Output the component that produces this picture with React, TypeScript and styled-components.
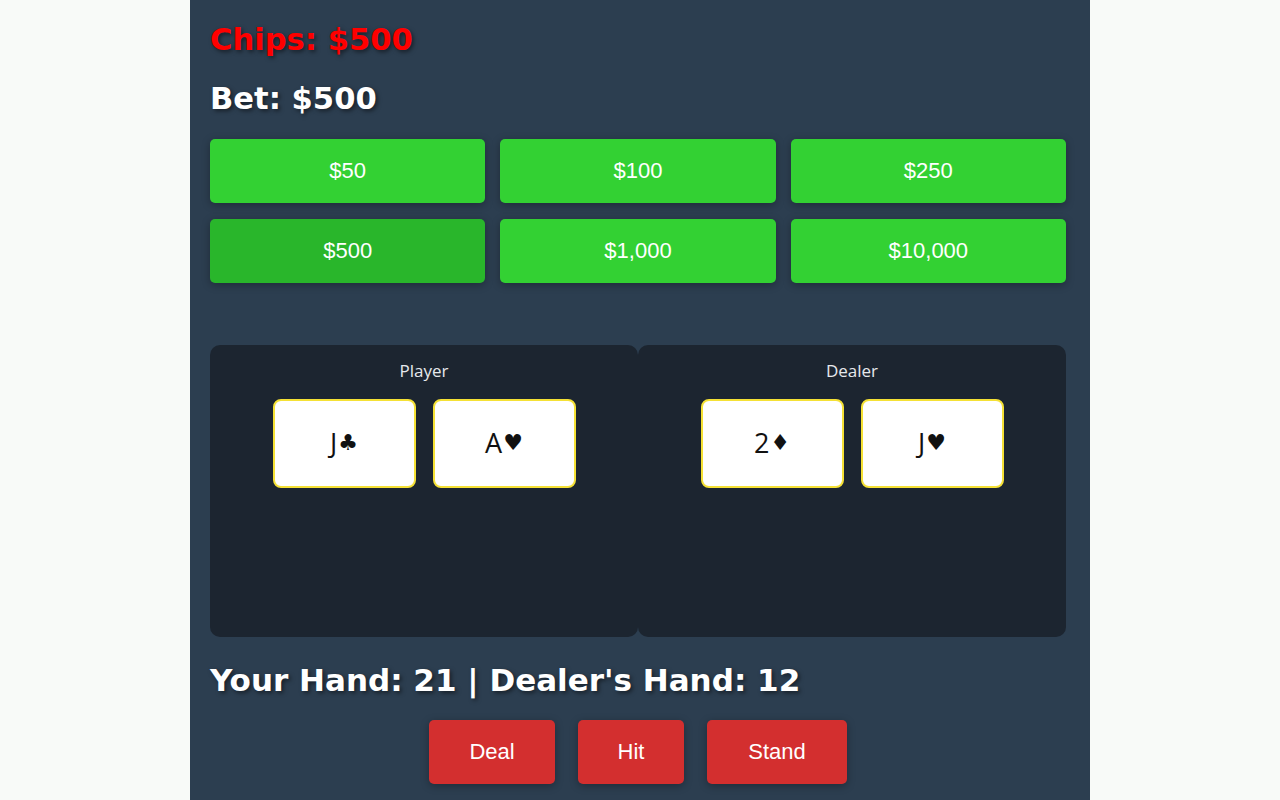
import React from "react";
import styled, { createGlobalStyle } from "styled-components";

const Global = createGlobalStyle`
  html, body { margin: 0; padding: 0; background: #f8faf8; }
  * { box-sizing: border-box; }
`;

const Page = styled.div`
  display: flex;
  justify-content: center;
  min-height: 800px;
`;

const Table = styled.div`
  width: 900px;
  background: #2c3e50;
  padding: 20px 24px 20px 20px;
  display: flex;
  flex-direction: column;
`;

const Title = styled.div<{ $color?: string }>`
  font-family: "DejaVu Sans", Verdana, sans-serif;
  font-weight: bold;
  font-size: 30.6px;
  line-height: 40px;
  color: ${(p) => p.$color || "#ffffff"};
  text-shadow: 2px 2px 4px rgba(0, 0, 0, 0.5);
`;

const BetGrid = styled.div`
  display: grid;
  grid-template-columns: repeat(3, 1fr);
  column-gap: 15px;
  row-gap: 16px;
  margin-top: 20px;
`;

const BetButton = styled.button<{ $active?: boolean }>`
  height: 64px;
  border: none;
  border-radius: 5px;
  background: ${(p) => (p.$active ? "#29b62b" : "#33d133")};
  color: #ffffff;
  font-family: "Liberation Sans", Arial, sans-serif;
  font-size: 22px;
  box-shadow: 0 2px 8px rgba(0, 0, 0, 0.3);
  cursor: pointer;
`;

const Hands = styled.div`
  display: grid;
  grid-template-columns: 1fr 1fr;
  margin-top: 62px;
`;

const Hand = styled.div`
  height: 292px;
  background: #1c2530;
  border-radius: 10px;
  padding-top: 15px;
  display: flex;
  flex-direction: column;
  align-items: center;
`;

const HandLabel = styled.div`
  font-family: "Open Sans", "Noto Sans", sans-serif;
  font-size: 17px;
  line-height: 22px;
  color: #e6e9ec;
`;

const CardRow = styled.div`
  display: flex;
  gap: 17px;
  margin-top: 17px;
`;

const Card = styled.div`
  width: 143px;
  height: 89px;
  background: #ffffff;
  border: 2.5px solid #f5e135;
  border-radius: 8px;
  display: flex;
  align-items: center;
  justify-content: center;
  font-family: "Open Sans", "Noto Sans", sans-serif;
  font-size: 27px;
  color: #111;
  padding-bottom: 3px;
`;

const Suit = styled.span`
  font-family: "DejaVu Sans", sans-serif;
  font-size: 22px;
  margin-left: 1px;
`;

const Score = styled(Title)`
  font-size: 31px;
  margin-top: 23px;
`;

const Actions = styled.div`
  display: flex;
  justify-content: center;
  gap: 23px;
  margin-top: 20px;
`;

const ActionButton = styled.button<{ $w: number }>`
  width: ${(p) => p.$w}px;
  height: 64px;
  border: none;
  border-radius: 5px;
  background: #d32f2f;
  color: #ffffff;
  font-family: "Liberation Sans", Arial, sans-serif;
  font-size: 22px;
  box-shadow: 0 2px 8px rgba(0, 0, 0, 0.3);
  cursor: pointer;
`;

const bets = ["$50", "$100", "$250", "$500", "$1,000", "$10,000"];

const hands = [
  { name: "Player", cards: [["J", "♣"], ["A", "♥"]] },
  { name: "Dealer", cards: [["2", "♦"], ["J", "♥"]] },
];

export default function App() {
  return (
    <>
      <Global />
      <Page>
        <Table>
          <Title $color="#ff0000">Chips: $500</Title>
          <Title style={{ marginTop: 19 }}>Bet: $500</Title>
          <BetGrid>
            {bets.map((b) => (
              <BetButton key={b} $active={b === "$500"}>
                {b}
              </BetButton>
            ))}
          </BetGrid>
          <Hands>
            {hands.map((h) => (
              <Hand key={h.name}>
                <HandLabel>{h.name}</HandLabel>
                <CardRow>
                  {h.cards.map(([r, s]) => (
                    <Card key={r + s}>
                      {r}
                      <Suit>{s}</Suit>
                    </Card>
                  ))}
                </CardRow>
              </Hand>
            ))}
          </Hands>
          <Score>Your Hand: 21 | Dealer's Hand: 12</Score>
          <Actions>
            <ActionButton $w={126}>Deal</ActionButton>
            <ActionButton $w={106}>Hit</ActionButton>
            <ActionButton $w={140}>Stand</ActionButton>
          </Actions>
        </Table>
      </Page>
    </>
  );
}
